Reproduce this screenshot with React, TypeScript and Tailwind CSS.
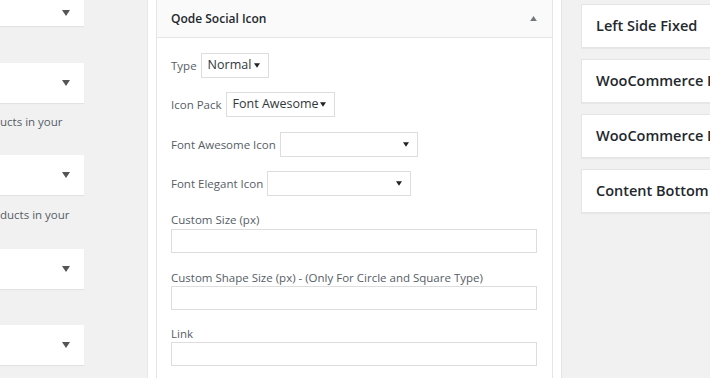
import React from "react";

const font = { fontFamily: '"Open Sans", "Noto Sans", sans-serif' };

function Caret({ up = false, className = "" }: { up?: boolean; className?: string }) {
  return (
    <svg width="8" height="6" viewBox="0 0 8 6" className={className}>
      {up ? <path d="M4 0 L8 6 L0 6 Z" fill="currentColor" /> : <path d="M0 0 L8 0 L4 6 Z" fill="currentColor" />}
    </svg>
  );
}

function SelectBox({ value, width }: { value?: string; width: string }) {
  return (
    <div className={`flex h-[25px] shrink-0 items-center justify-between whitespace-nowrap border border-[#dddddd] bg-white pl-[6px] pr-[8px] ${width}`}>
      <span className="text-[12.5px] text-[#32373c]">{value}</span>
      <Caret className="h-[5px] w-[6px] shrink-0 text-[#222]" />
    </div>
  );
}

function LeftBox({ className = "" }: { className?: string }) {
  return (
    <div className={`flex h-[40px] w-[84px] items-center justify-end bg-white pr-[14px] shadow-[0_1px_1px_rgba(0,0,0,0.06)] ${className}`}>
      <Caret className="text-[#555]" />
    </div>
  );
}

function RightBox({ title, className = "" }: { title: string; className?: string }) {
  return (
    <div className={`flex h-[44px] items-center overflow-hidden whitespace-nowrap border border-r-0 border-[#e5e5e5] bg-white pl-[14px] shadow-[0_1px_1px_rgba(0,0,0,0.04)] ${className}`}>
      <span className="text-[14.5px] font-semibold text-[#23282d]">{title}</span>
    </div>
  );
}

export default function App() {
  return (
    <div className="flex h-[378px] w-[710px] overflow-hidden bg-[#f1f1f1]" style={font}>
      <div className="flex w-[147px] shrink-0 flex-col">
        <div className="flex h-[26px] w-[84px] items-center justify-end bg-white pr-[14px] shadow-[0_1px_1px_rgba(0,0,0,0.06)]">
          <Caret className="text-[#555]" />
        </div>
        <LeftBox className="mt-[37px]" />
        <p className="mt-[11px] whitespace-nowrap text-[11.5px] leading-[16px] text-[#555d66]">ucts in your</p>
        <LeftBox className="mt-[25px]" />
        <p className="mt-[12px] whitespace-nowrap text-[11.5px] leading-[16px] text-[#555d66]">ducts in your</p>
        <LeftBox className="mt-[26px]" />
        <LeftBox className="mt-[36px]" />
      </div>

      <div className="flex w-[415px] shrink-0 border-x border-[#e5e5e5] bg-white px-[8px]">
        <div className="flex w-full flex-col border-x border-[#e5e5e5]">
          <div className="flex h-[38px] items-center justify-between border-b border-[#e5e5e5] bg-[#fafafa] pl-[14px] pr-[15px]">
            <span className="text-[12px] font-semibold text-[#23282d]">Qode Social Icon</span>
            <Caret up className="h-[5px] w-[7px] text-[#72777c]" />
          </div>
          <div className="flex flex-col pl-[14px] pr-[15px] pt-[15px] text-[11.5px] text-[#555d66]">
            <div className="flex items-center gap-[4px]">
              <span>Type</span>
              <SelectBox value="Normal" width="w-[68px]" />
            </div>
            <div className="mt-[14px] flex items-center gap-[4px]">
              <span>Icon Pack</span>
              <SelectBox value="Font Awesome" width="w-[109px]" />
            </div>
            <div className="mt-[15px] flex items-center gap-[4px]">
              <span>Font Awesome Icon</span>
              <SelectBox width="w-[138px]" />
            </div>
            <div className="mt-[14px] flex items-center gap-[4px]">
              <span>Font Elegant Icon</span>
              <SelectBox width="w-[144px]" />
            </div>
            <p className="mt-[16px] leading-[16px]">Custom Size (px)</p>
            <div className="mt-[1px] h-[24px] border border-[#dddddd] bg-white" />
            <p className="mt-[17px] leading-[16px]">Custom Shape Size (px) - (Only For Circle and Square Type)</p>
            <div className="h-[24px] border border-[#dddddd] bg-white" />
            <p className="mt-[16px] leading-[16px]">Link</p>
            <div className="h-[24px] border border-[#dddddd] bg-white" />
          </div>
        </div>
      </div>

      <div className="flex flex-1 flex-col pl-[19px] pt-[4px]">
        <RightBox title="Left Side Fixed" />
        <RightBox title="WooCommerce Product" className="mt-[11px]" />
        <RightBox title="WooCommerce  Dropdown" className="mt-[11px]" />
        <RightBox title="Content Bottom" className="mt-[11px]" />
      </div>
    </div>
  );
}
